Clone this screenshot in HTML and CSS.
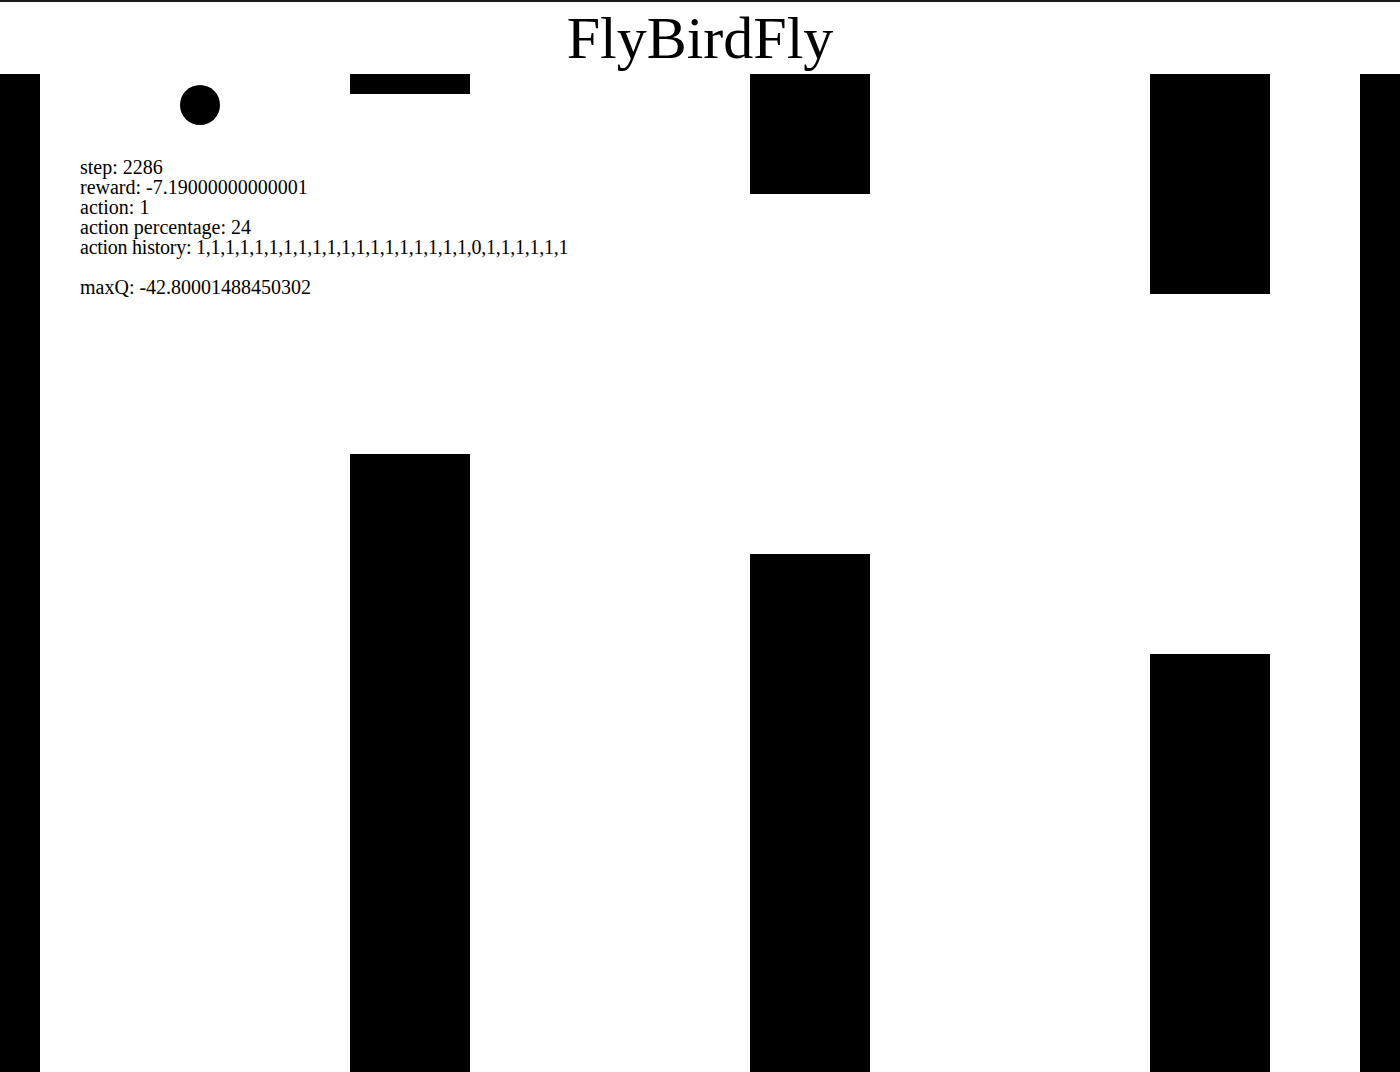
FILE: index.html
```html
<!DOCTYPE html>
<html lang="en">
<head>
  <meta charset="UTF-8" />
  <title>FlyBirdFly</title>
  <link rel="stylesheet" href="styles.css">
</head>
<body>
  <h1 class="title">FlyBirdFly</h1>

  <div class="game">
    <!-- game field: walls, pipes and the bird -->
    <svg class="field" width="1400" height="998" viewBox="0 0 1400 998">
      <rect x="0" y="0" width="40" height="998" />
      <rect x="1360" y="0" width="40" height="998" />

      <rect x="350" y="0" width="120" height="20" />
      <rect x="350" y="380" width="120" height="618" />

      <rect x="750" y="0" width="120" height="120" />
      <rect x="750" y="480" width="120" height="518" />

      <rect x="1150" y="0" width="120" height="220" />
      <rect x="1150" y="580" width="120" height="418" />

      <circle cx="200" cy="31" r="20" />
    </svg>

    <div class="stats">
      <div>step: 2286</div>
      <div>reward: -7.19000000000001</div>
      <div>action: 1</div>
      <div>action percentage: 24</div>
      <div class="history">action history: 1,1,1,1,1,1,1,1,1,1,1,1,1,1,1,1,1,1,1,0,1,1,1,1,1,1</div>
      <div>&nbsp;</div>
      <div>maxQ: -42.80001488450302</div>
    </div>
  </div>
</body>
</html>
```

FILE: styles.css
```css
html, body {
  margin: 0;
  padding: 0;
  background: #fff;
  overflow: hidden;
}

body {
  font-family: "Liberation Serif", "Times New Roman", serif;
  color: #000;
  border-top: 2px solid #1a1a1a;
}

.title {
  margin: 0;
  height: 72px;
  font-size: 60px;
  line-height: 72px;
  font-weight: normal;
  text-align: center;
}

.game {
  position: relative;
  width: 1400px;
  height: 998px;
}

.field {
  display: block;
  fill: #000;
}

.stats {
  position: absolute;
  top: 83px;
  left: 80px;
  font-size: 20px;
  line-height: 20px;
}

.history {
  letter-spacing: -0.25px;
}
```
